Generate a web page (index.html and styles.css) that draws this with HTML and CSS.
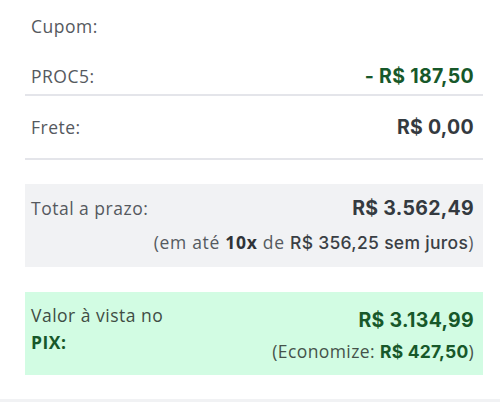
FILE: index.html
```html
<!DOCTYPE html>
<html lang="pt-BR">
<head>
<meta charset="utf-8">
<link rel="stylesheet" href="styles.css">
</head>
<body>
<div class="summary">
  <div class="row cupom">
    <span class="label">Cupom:</span>
  </div>
  <div class="row proc">
    <span class="label">PROC5:</span>
    <span class="value discount">- R$ 187,50</span>
  </div>
  <div class="row frete">
    <span class="label">Frete:</span>
    <span class="value">R$ 0,00</span>
  </div>
  <div class="box prazo">
    <div class="box-top">
      <span class="label">Total a prazo:</span>
      <span class="value">R$ 3.562,49</span>
    </div>
    <div class="sub">(em até <b>10x</b> de <span class="strong">R$ 356,25 sem juros</span>)</div>
  </div>
  <div class="box pix">
    <div class="pix-label">Valor à vista no <b>PIX:</b></div>
    <div class="pix-right">
      <div class="value green">R$ 3.134,99</div>
      <div class="sub econ">(Economize: <b>R$ 427,50</b>)</div>
    </div>
  </div>
</div>
<div class="bottom-band"></div>
</body>
</html>
```

FILE: styles.css
```css
html, body {
  margin: 0;
  padding: 0;
  background: #ffffff;
}

body {
  font-family: "Open Sans", "DejaVu Sans", sans-serif;
  color: #555a60;
}

.summary {
  width: 458px;
  margin-left: 25px;
}

.row {
  display: flex;
  justify-content: space-between;
  align-items: center;
  padding: 0 9px 0 6px;
}

.label {
  font-size: 17.5px;
  letter-spacing: 0.5px;
  color: #55595e;
}

.value {
  font-family: Inter, "Liberation Sans", sans-serif;
  font-weight: 700;
  font-size: 19.5px;
  letter-spacing: 0.3px;
  color: #343a40;
  line-height: 24px;
}

.value.discount, .value.green {
  color: #17582a;
}

.cupom {
  height: 52px;
}

.proc {
  height: 36px;
  padding-top: 6px;
  border-bottom: 2px solid #e4e5ea;
}

.frete {
  height: 62px;
  border-bottom: 2px solid #e4e5ea;
}

.box {
  padding: 12px 9px 15px 6px;
}

.prazo {
  margin-top: 24px;
  background: #f1f2f4;
  height: 56px;
}

.box-top {
  display: flex;
  justify-content: space-between;
  align-items: center;
  height: 24px;
}

.sub {
  margin-top: 11px;
  text-align: right;
  font-size: 17.5px;
  letter-spacing: 0.7px;
  line-height: 22px;
  color: #555a60;
}

.sub b {
  font-weight: 700;
  color: #2f3338;
}

.sub .strong {
  font-family: Inter, "Liberation Sans", sans-serif;
  font-size: 17.5px;
  letter-spacing: 0.3px;
  font-weight: 500;
  color: #3a3f45;
}

.pix {
  margin-top: 25px;
  background: #d2fce3;
  display: flex;
  justify-content: space-between;
  padding: 10px 9px 0 6px;
  height: 73px;
}

.pix-label {
  width: 150px;
  font-size: 17.5px;
  letter-spacing: 0.5px;
  line-height: 27px;
  color: #3f4d43;
}

.pix-label b {
  color: #17582a;
}

.pix-right {
  padding-top: 6px;
  text-align: right;
}

.econ {
  margin-top: 8px;
  letter-spacing: 0.4px;
  color: #45524a;
}

.econ b {
  font-family: Inter, "Liberation Sans", sans-serif;
  letter-spacing: 0.2px;
  color: #17582a;
}

.bottom-band {
  margin-top: 24px;
  height: 6px;
  background: #f1f2f4;
}
```
